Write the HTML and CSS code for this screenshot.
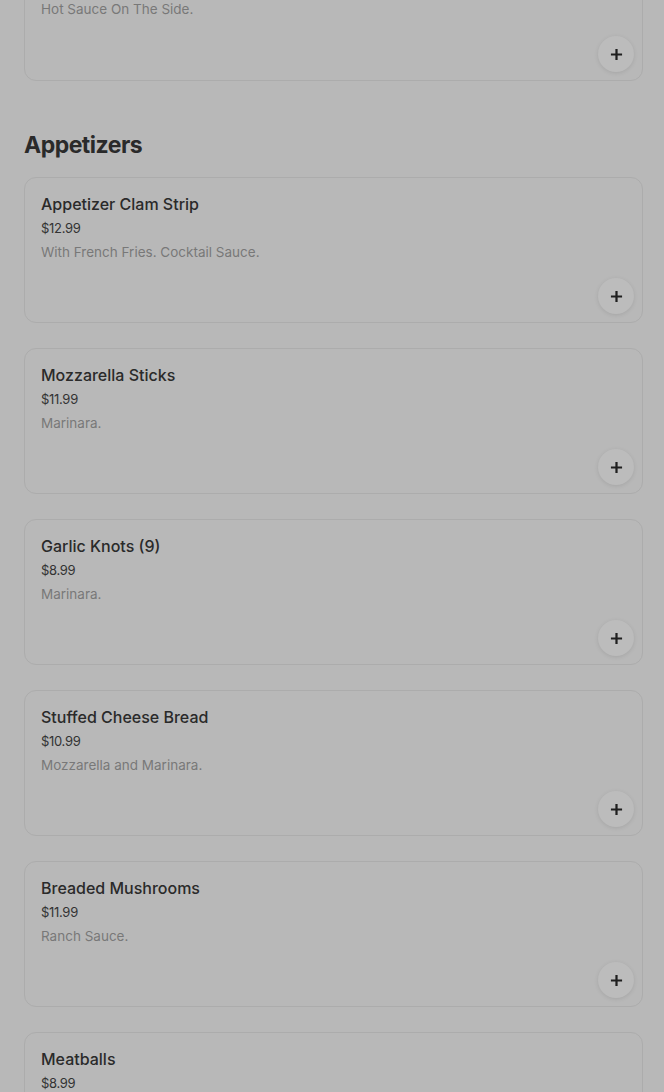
FILE: index.html
```html
<!DOCTYPE html>
<html>
<head>
    <title>Menu</title>
    <link rel="stylesheet" href="styles.css">
</head>
<body>
    <div class="page">
        <div class="card card-clipped">
            <div class="item-desc">Hot Sauce On The Side.</div>
            <button class="add-btn" aria-label="Add">
                <svg width="13" height="13" viewBox="0 0 14 14"><path d="M7 1v12M1 7h12" stroke="#1f1f1f" stroke-width="2.4"/></svg>
            </button>
        </div>

        <h2 class="section-title">Appetizers</h2>

        <div class="card">
            <div class="item-name">Appetizer Clam Strip</div>
            <div class="item-price">$12.99</div>
            <div class="item-desc">With French Fries. Cocktail Sauce.</div>
            <button class="add-btn" aria-label="Add">
                <svg width="13" height="13" viewBox="0 0 14 14"><path d="M7 1v12M1 7h12" stroke="#1f1f1f" stroke-width="2.4"/></svg>
            </button>
        </div>

        <div class="card">
            <div class="item-name">Mozzarella Sticks</div>
            <div class="item-price">$11.99</div>
            <div class="item-desc">Marinara.</div>
            <button class="add-btn" aria-label="Add">
                <svg width="13" height="13" viewBox="0 0 14 14"><path d="M7 1v12M1 7h12" stroke="#1f1f1f" stroke-width="2.4"/></svg>
            </button>
        </div>

        <div class="card">
            <div class="item-name">Garlic Knots (9)</div>
            <div class="item-price">$8.99</div>
            <div class="item-desc">Marinara.</div>
            <button class="add-btn" aria-label="Add">
                <svg width="13" height="13" viewBox="0 0 14 14"><path d="M7 1v12M1 7h12" stroke="#1f1f1f" stroke-width="2.4"/></svg>
            </button>
        </div>

        <div class="card">
            <div class="item-name">Stuffed Cheese Bread</div>
            <div class="item-price">$10.99</div>
            <div class="item-desc">Mozzarella and Marinara.</div>
            <button class="add-btn" aria-label="Add">
                <svg width="13" height="13" viewBox="0 0 14 14"><path d="M7 1v12M1 7h12" stroke="#1f1f1f" stroke-width="2.4"/></svg>
            </button>
        </div>

        <div class="card">
            <div class="item-name">Breaded Mushrooms</div>
            <div class="item-price">$11.99</div>
            <div class="item-desc">Ranch Sauce.</div>
            <button class="add-btn" aria-label="Add">
                <svg width="13" height="13" viewBox="0 0 14 14"><path d="M7 1v12M1 7h12" stroke="#1f1f1f" stroke-width="2.4"/></svg>
            </button>
        </div>

        <div class="card">
            <div class="item-name">Meatballs</div>
            <div class="item-price">$8.99</div>
            <div class="item-desc">Marinara.</div>
            <button class="add-btn" aria-label="Add">
                <svg width="13" height="13" viewBox="0 0 14 14"><path d="M7 1v12M1 7h12" stroke="#1f1f1f" stroke-width="2.4"/></svg>
            </button>
        </div>
    </div>
</body>
</html>
```

FILE: styles.css
```css
body {
    font-family: Inter, "Liberation Sans", Arial, sans-serif;
    margin: 0;
    padding: 0;
    background-color: #b8b8b8;
    color: #2a2a2a;
    overflow: hidden;
}

.page {
    padding: 0 21px 0 24px;
    display: flex;
    flex-direction: column;
    gap: 25px;
}

.card {
    display: flex;
    flex-direction: column;
    box-sizing: border-box;
    min-height: 146px;
    padding: 15px 8px 8px 16px;
    border: 1px solid #acacac;
    border-radius: 12px;
}

.card-clipped {
    margin-top: -65px;
    padding-top: 59px;
}

.item-name {
    font-size: 16px;
    font-weight: 500;
    line-height: 22px;
    color: #2a2a2a;
}

.item-price {
    font-size: 13px;
    line-height: 20px;
    margin-top: 3px;
    letter-spacing: -0.3px;
    color: #333;
}

.item-desc {
    font-size: 13.5px;
    line-height: 20px;
    margin-top: 4px;
    color: #787878;
}

.add-btn {
    margin-top: auto;
    align-self: flex-end;
    width: 36px;
    height: 36px;
    border-radius: 50%;
    border: none;
    padding: 0;
    display: flex;
    align-items: center;
    justify-content: center;
    background-color: #bcbcbc;
    box-shadow: 0 1px 4px rgba(0, 0, 0, 0.1);
}

.section-title {
    margin: 23px 0 -9px;
    font-size: 23px;
    font-weight: 700;
    line-height: 32px;
    letter-spacing: -0.5px;
    color: #2a2a2a;
}
```
